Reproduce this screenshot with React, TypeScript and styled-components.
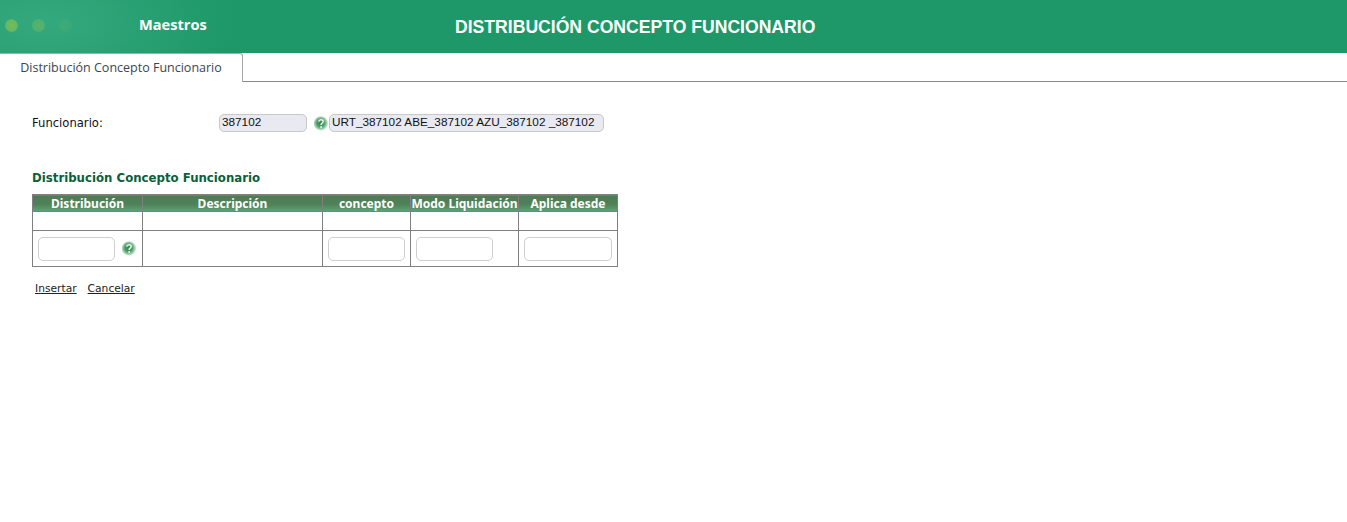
import React from 'react';
import styled, { createGlobalStyle } from 'styled-components';

const GlobalStyle = createGlobalStyle`
  html, body {
    margin: 0;
    padding: 0;
    background: #fff;
    font-family: "Noto Sans", "Open Sans", sans-serif;
  }
`;

const Header = styled.header`
  display: flex;
  align-items: center;
  height: 53px;
  background: radial-gradient(ellipse 190px 90px at 45px 22px, #35a97e 0%, #1e9868 100%);
`;

const Dots = styled.div`
  display: flex;
  gap: 14px;
  width: 139px;
  padding: 0 0 2px 5px;
  box-sizing: border-box;
`;

const Dot = styled.span<{ $fade: number }>`
  width: 13px;
  height: 13px;
  border-radius: 50%;
  background: radial-gradient(circle, #8cc152 0%, #7dbd5c 55%, rgba(125, 189, 92, 0.4) 100%);
  opacity: ${(p) => p.$fade};
`;

const Module = styled.div`
  width: 316px;
  padding-bottom: 5px;
  font-family: "Open Sans", sans-serif;
  font-size: 14.6px;
  font-weight: 700;
  color: #fff;
`;

const PageTitle = styled.h1`
  margin: 1px 0 0;
  font-family: "Liberation Sans", Arial, sans-serif;
  font-size: 17.6px;
  font-weight: 700;
  color: #fff;
`;

const TabBar = styled.div`
  display: flex;
  height: 29px;
  box-sizing: border-box;
  border-bottom: 1px solid #8a8a8a;
`;

const Tab = styled.div`
  width: 243px;
  height: 29px;
  box-sizing: border-box;
  border: 1px solid #a9a9a9;
  border-bottom: none;
  border-left: none;
  border-radius: 0 3px 0 0;
  background: #fff;
  text-align: center;
  line-height: 28px;
  font-family: "Open Sans", sans-serif;
  font-size: 12.5px;
  color: #3c4650;
`;

const Content = styled.main`
  padding: 32px 0 0 32px;
`;

const FieldRow = styled.div`
  display: flex;
  align-items: center;
  height: 18px;
  margin-bottom: 39px;
`;

const FieldLabel = styled.label`
  width: 187px;
  font-family: "DejaVu Sans", sans-serif;
  font-size: 11.6px;
  color: #111;
`;

const ReadOnly = styled.div<{ $width: number }>`
  width: ${(p) => p.$width}px;
  height: 18px;
  box-sizing: border-box;
  padding-left: 2px;
  border: 1px solid #c8c8c8;
  border-radius: 5px;
  background: #e9e9f2;
  font-family: "Liberation Sans", Arial, sans-serif;
  font-size: 11.75px;
  line-height: 14px;
  white-space: nowrap;
  color: #111;
`;

const HelpWrap = styled.span<{ $gap: number }>`
  display: inline-flex;
  margin-left: ${(p) => p.$gap}px;
`;

const SectionTitle = styled.h2`
  margin: 0 0 8px;
  height: 15px;
  font-family: "DejaVu Sans", sans-serif;
  font-size: 11.75px;
  line-height: 15px;
  font-weight: 700;
  color: #0b5f3a;
`;

const Grid = styled.table`
  width: 585px;
  table-layout: fixed;
  border-collapse: collapse;
  border: 1px solid #808080;
`;

const HeadCell = styled.th<{ $width: number }>`
  width: ${(p) => p.$width}px;
  height: 17px;
  box-sizing: border-box;
  padding: 0;
  border: 1px solid #808080;
  background: linear-gradient(#4a7c55 0%, #4f8259 55%, #5ea377 100%);
  font-family: "Noto Sans", sans-serif;
  font-size: 12px;
  font-weight: 700;
  line-height: 15px;
  white-space: nowrap;
  color: #fff;
`;

const EmptyRow = styled.tr`
  height: 19px;
`;

const InputRow = styled.tr`
  height: 36px;
`;

const Cell = styled.td`
  padding: 0 0 0 5px;
  border: 1px solid #808080;
`;

const CellRow = styled.div`
  display: flex;
  align-items: center;
`;

const TextInput = styled.input<{ $width: number }>`
  display: block;
  width: ${(p) => p.$width}px;
  height: 24px;
  box-sizing: border-box;
  padding: 0 4px;
  border: 1px solid #cfcfcf;
  border-radius: 5px;
  background: #fff;
  outline: none;
`;

const Actions = styled.div`
  display: flex;
  gap: 11px;
  padding: 15px 0 0 3px;
`;

const ActionLink = styled.a`
  font-family: "DejaVu Sans", sans-serif;
  font-size: 10.7px;
  color: #222;
  text-decoration: underline;
  cursor: pointer;
`;

const HelpIcon = () => (
  <svg width="15" height="15" viewBox="0 0 15 15" aria-hidden="true">
    <defs>
      <radialGradient id="helpBall" cx="47%" cy="47%" r="53%">
        <stop offset="0%" stopColor="#2b8547" />
        <stop offset="50%" stopColor="#4d9f69" />
        <stop offset="100%" stopColor="#e2f0e6" />
      </radialGradient>
    </defs>
    <circle cx="7" cy="7.5" r="7.2" fill="url(#helpBall)" />
    <path
      d="M4.7 5.7C4.9 4.3 5.9 3.8 7 3.8c1.4 0 2.2.8 2.2 1.8 0 1.6-2.1 1.6-2.1 3.3"
      fill="none"
      stroke="#eef6f0"
      strokeWidth="1.5"
    />
    <circle cx="7.1" cy="11" r="1" fill="#eef6f0" />
  </svg>
);

const columns = [
  { title: 'Distribución', width: 110 },
  { title: 'Descripción', width: 180 },
  { title: 'concepto', width: 88 },
  { title: 'Modo Liquidación', width: 108 },
  { title: 'Aplica desde', width: 99 },
];

export default function App() {
  return (
    <>
      <GlobalStyle />
      <Header>
        <Dots>
          <Dot $fade={0.75} />
          <Dot $fade={0.4} />
          <Dot $fade={0.12} />
        </Dots>
        <Module>Maestros</Module>
        <PageTitle>DISTRIBUCIÓN CONCEPTO FUNCIONARIO</PageTitle>
      </Header>
      <TabBar>
        <Tab>Distribución Concepto Funcionario</Tab>
      </TabBar>
      <Content>
        <FieldRow>
          <FieldLabel>Funcionario:</FieldLabel>
          <ReadOnly $width={88}>387102</ReadOnly>
          <HelpWrap $gap={7}>
            <HelpIcon />
          </HelpWrap>
          <ReadOnly $width={275}>URT_387102 ABE_387102 AZU_387102 _387102</ReadOnly>
        </FieldRow>
        <SectionTitle>Distribución Concepto Funcionario</SectionTitle>
        <Grid>
          <thead>
            <tr>
              {columns.map((c) => (
                <HeadCell key={c.title} $width={c.width}>
                  {c.title}
                </HeadCell>
              ))}
            </tr>
          </thead>
          <tbody>
            <EmptyRow>
              {columns.map((c) => (
                <Cell key={c.title} />
              ))}
            </EmptyRow>
            <InputRow>
              <Cell>
                <CellRow>
                  <TextInput $width={77} />
                  <HelpWrap $gap={7}>
                    <HelpIcon />
                  </HelpWrap>
                </CellRow>
              </Cell>
              <Cell />
              <Cell>
                <TextInput $width={77} />
              </Cell>
              <Cell>
                <TextInput $width={77} />
              </Cell>
              <Cell>
                <TextInput $width={88} />
              </Cell>
            </InputRow>
          </tbody>
        </Grid>
        <Actions>
          <ActionLink>Insertar</ActionLink>
          <ActionLink>Cancelar</ActionLink>
        </Actions>
      </Content>
    </>
  );
}
